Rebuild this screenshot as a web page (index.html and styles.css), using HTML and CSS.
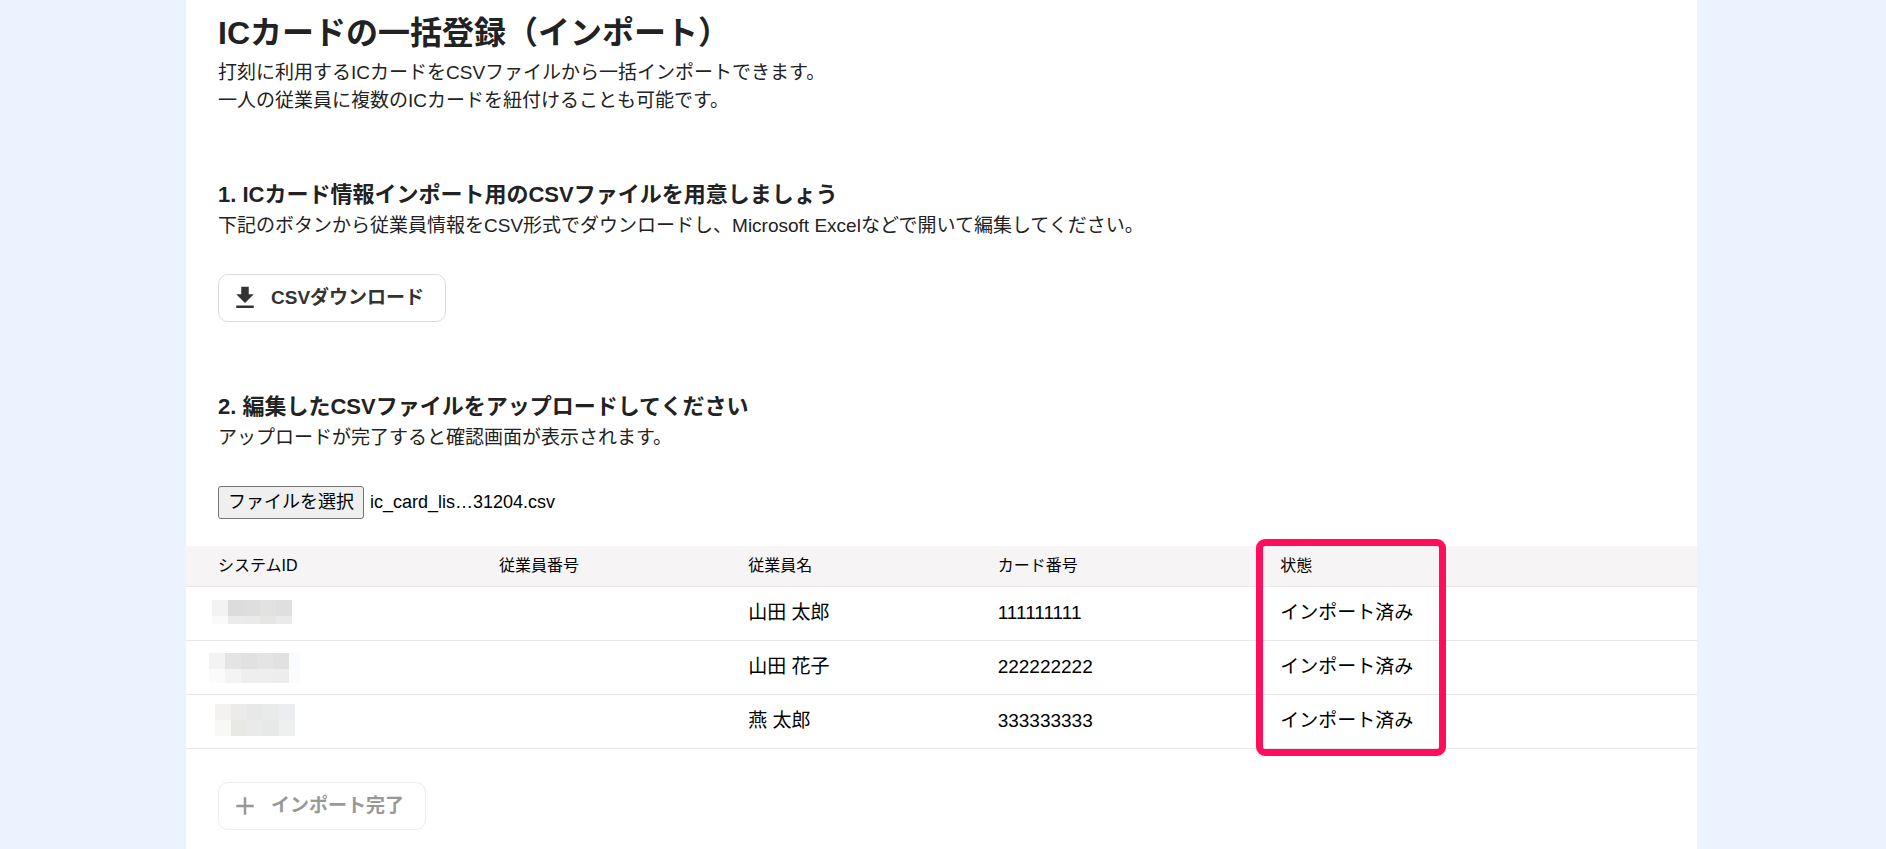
FILE: index.html
```html
<!DOCTYPE html>
<html lang="ja">
<head>
  <meta charset="UTF-8">
  <meta name="viewport" content="width=device-width, initial-scale=1.0">
  <title>ICカードの一括登録（インポート）</title>
  <link rel="stylesheet" href="styles.css">
</head>
<body>
  <main class="panel">
    <header class="intro">
      <h1>ICカードの一括登録（インポート）</h1>
      <p>打刻に利用するICカードをCSVファイルから一括インポートできます。<br>一人の従業員に複数のICカードを紐付けることも可能です。</p>
    </header>

    <section class="step">
      <h2>1. ICカード情報インポート用のCSVファイルを用意しましょう</h2>
      <p>下記のボタンから従業員情報をCSV形式でダウンロードし、Microsoft Excelなどで開いて編集してください。</p>
      <button type="button" class="btn">
        <svg class="icon" viewBox="0 0 24 24" aria-hidden="true"><path d="M19 9h-4V3H9v6H5l7 7 7-7zM5 18v2h14v-2H5z"/></svg>
        CSVダウンロード
      </button>
    </section>

    <section class="step">
      <h2>2. 編集したCSVファイルをアップロードしてください</h2>
      <p>アップロードが完了すると確認画面が表示されます。</p>
      <div class="file">
        <input type="file" id="csvFile" class="file-input" accept=".csv">
        <label for="csvFile" class="file-btn">ファイルを選択</label>
        <span class="file-name">ic_card_lis…31204.csv</span>
      </div>
    </section>

    <table class="cards">
      <colgroup>
        <col class="col-id">
        <col class="col-number">
        <col class="col-name">
        <col class="col-card">
        <col>
      </colgroup>
      <thead>
        <tr>
          <th>システムID</th>
          <th>従業員番号</th>
          <th>従業員名</th>
          <th>カード番号</th>
          <th class="status">状態<span class="highlight"></span></th>
        </tr>
      </thead>
      <tbody>
        <tr>
          <td>
            <svg class="mask" viewBox="0 0 96 36" aria-hidden="true">
              <path fill="#f3f3f3" d="M3 5h16v16H3z"/><path fill="#dcdcdc" d="M19 5h16v16H19z"/><path fill="#dedede" d="M35 5h16v16H35z"/><path fill="#e2e2e0" d="M51 5h16v16H51z"/><path fill="#dfdfdf" d="M67 5h16v16H67z"/>
              <path fill="#fafafa" d="M3 21h16v8H3z"/><path fill="#ebebeb" d="M19 21h16v8H19z"/><path fill="#e8ebea" d="M35 21h16v8H35z"/><path fill="#e6e6e4" d="M51 21h16v8H51z"/><path fill="#e9ebea" d="M67 21h16v8H67z"/>
            </svg>
          </td>
          <td></td>
          <td>山田 太郎</td>
          <td>111111111</td>
          <td>インポート済み</td>
        </tr>
        <tr>
          <td>
            <svg class="mask" viewBox="0 0 96 36" aria-hidden="true">
              <path fill="#f3f3f3" d="M0 4h16v16H0z"/><path fill="#e4e4e4" d="M16 4h16v16H16z"/><path fill="#e1e1e1" d="M32 4h16v16H32z"/><path fill="#e4e4e4" d="M48 4h16v16H48z"/><path fill="#e1e1e1" d="M64 4h16v16H64z"/><path fill="#f9fbff" d="M80 4h11v16H80z"/>
              <path fill="#fbfbfb" d="M0 20h16v14H0z"/><path fill="#f4f4f4" d="M16 20h16v14H16z"/><path fill="#eeeeee" d="M32 20h32v14H32z"/><path fill="#ededed" d="M64 20h16v14H64z"/><path fill="#fcfcfc" d="M80 20h11v14H80z"/>
            </svg>
          </td>
          <td></td>
          <td>山田 花子</td>
          <td>222222222</td>
          <td>インポート済み</td>
        </tr>
        <tr>
          <td>
            <svg class="mask" viewBox="0 0 96 36" aria-hidden="true">
              <path fill="#f3f2f0" d="M6 1h16v16H6z"/><path fill="#ebebeb" d="M22 1h16v16H22z"/><path fill="#e8e8e8" d="M38 1h16v16H38z"/><path fill="#e9ebea" d="M54 1h16v16H54z"/><path fill="#ecedf0" d="M70 1h16v16H70z"/>
              <path fill="#f8f8f6" d="M6 17h16v16H6z"/><path fill="#e8e8e5" d="M22 17h16v16H22z"/><path fill="#eaeaea" d="M38 17h16v16H38z"/><path fill="#e7e9e8" d="M54 17h16v16H54z"/><path fill="#eeefef" d="M70 17h16v16H70z"/>
            </svg>
          </td>
          <td></td>
          <td>燕 太郎</td>
          <td>333333333</td>
          <td>インポート済み</td>
        </tr>
      </tbody>
    </table>

    <div class="actions">
      <button type="button" class="btn" disabled>
        <svg class="icon" viewBox="0 0 24 24" aria-hidden="true"><path d="M19 13h-6v6h-2v-6H5v-2h6V5h2v6h6v2z"/></svg>
        インポート完了
      </button>
    </div>
  </main>
</body>
</html>
```
FILE: styles.css
```css
* {
  margin: 0;
  padding: 0;
  box-sizing: border-box;
}
body {
  font-family: "Liberation Sans", Arial, "Noto Sans CJK JP", sans-serif;
  font-size: 19px;
  line-height: 28px;
  color: #222;
  background: #ebf3ff;
  padding: 0 189px 0 186px;
}
.panel {
  min-height: 100vh;
  padding-top: 9px;
  background: #fff;
}
.intro,
.step,
.actions {
  padding: 0 32px;
}
.intro {
  margin-bottom: 63px;
}
h1 {
  margin-bottom: 2px;
  font-size: 32px;
  line-height: 48px;
}
h2 {
  font-size: 22px;
  line-height: 34px;
}
.step + .step {
  margin-top: 68px;
}
.step p {
  margin-bottom: 34px;
}
.btn {
  display: flex;
  align-items: center;
  gap: 11px;
  height: 48px;
  padding: 0 21px 0 11px;
  font: inherit;
  font-weight: bold;
  color: #333;
  background: #fff;
  border: 1px solid #dcdcdc;
  border-radius: 10px;
  cursor: pointer;
}
.btn:disabled {
  opacity: 0.5;
  cursor: default;
}
.icon {
  width: 30px;
  height: 30px;
  fill: currentColor;
}
.file {
  display: flex;
  align-items: center;
  gap: 6px;
  position: relative;
  color: #000;
  font-size: 18px;
  line-height: 27px;
}
.file-input {
  position: absolute;
  width: 1px;
  height: 1px;
  opacity: 0;
}
.file-btn {
  padding: 2px 9px;
  background: #efefef;
  border: 1px solid #767676;
  border-radius: 3px;
}
.cards {
  width: 100%;
  margin-top: 27px;
  border-collapse: collapse;
  table-layout: fixed;
  color: #000;
}
.col-id {
  width: 18.6%;
}
.col-number,
.col-name {
  width: 16.5%;
}
.col-card {
  width: 18.7%;
}
.cards th,
.cards td {
  height: 54px;
  padding-left: 32px;
  text-align: left;
  vertical-align: middle;
  font-weight: normal;
  border-bottom: 1px solid #e6e6e6;
}
.cards th {
  height: 40px;
  font-size: 16px;
  line-height: 24px;
  background: #f6f4f5;
}
.mask {
  display: block;
  width: 96px;
  height: 36px;
  margin-left: -9px;
}
.status {
  position: relative;
}
/* frame around the status column, header and three rows */
.highlight {
  position: absolute;
  top: -7px;
  left: 8px;
  width: 190px;
  height: 217px;
  border: 7px solid #ff0f5b;
  border-radius: 9px;
  pointer-events: none;
}
.actions {
  margin-top: 33px;
}
```
